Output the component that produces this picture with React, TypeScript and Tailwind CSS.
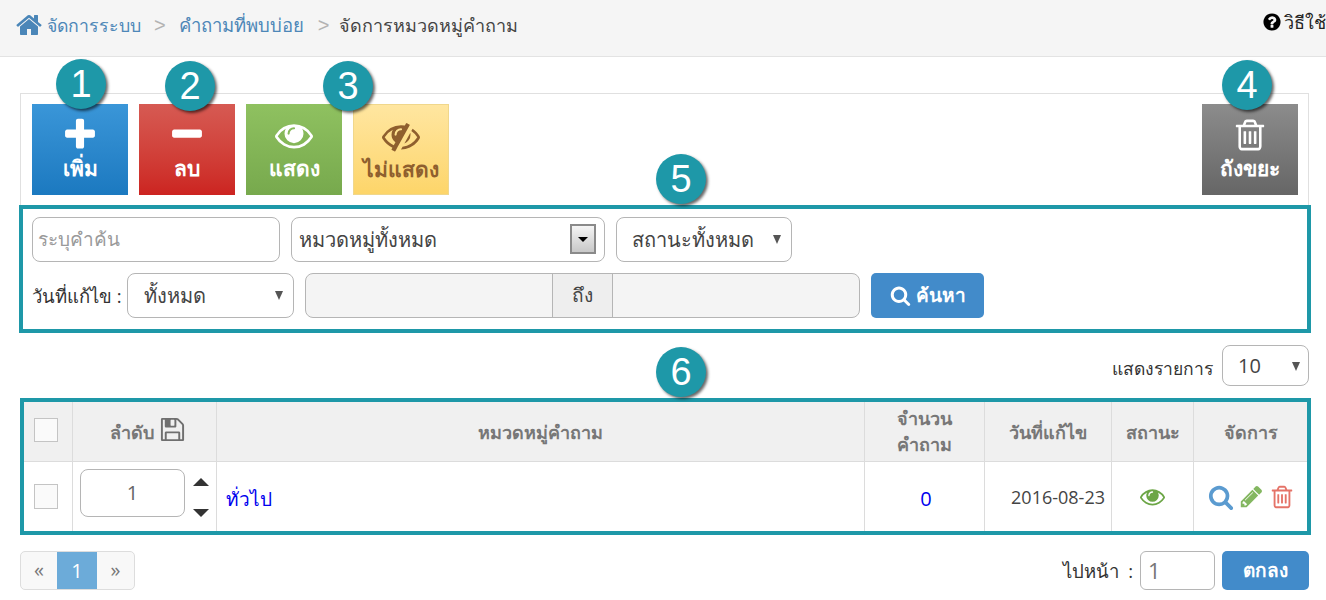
import type { ReactNode } from 'react';

const paths = {
  home: 'M1472 992v480q0 26-19 45t-45 19h-384v-384h-256v384h-384q-26 0-45-19t-19-45v-480q0-1 .5-3t.5-3l575-474 575 474q1 2 1 6zm223-69l-62 74q-8 9-21 11h-3q-13 0-21-7l-692-577-692 577q-12 8-24 7-13-2-21-11l-62-74q-8-10-7-23.500t11-21.500l719-599q32-26 76-26t76 26l244 204v-195q0-14 9-23t23-9h192q14 0 23 9t9 23v408l219 182q10 8 11 21.500t-7 23.500z',
  plus: 'M1600 736v192q0 40-28 68t-68 28h-416v416q0 40-28 68t-68 28h-192q-40 0-68-28t-28-68v-416h-416q-40 0-68-28t-28-68v-192q0-40 28-68t68-28h416v-416q0-40 28-68t68-28h192q40 0 68 28t28 68v416h416q40 0 68 28t28 68z',
  minus: 'M1600 736v192q0 40-28 68t-68 28h-1216q-40 0-68-28t-28-68v-192q0-40 28-68t68-28h1216q40 0 68 28t28 68z',
  eye: 'M1664 960q-152-236-381-353 61 104 61 225 0 185-131.500 316.500t-316.500 131.500-316.500-131.500-131.500-316.500q0-121 61-225-229 117-381 353 133 205 333.500 326.500t434.500 121.500 434.500-121.500 333.500-326.500zm-720-384q0-20-14-34t-34-14q-125 0-214.500 89.500t-89.500 214.500q0 20 14 34t34 14 34-14 14-34q0-86 61-147t147-61q20 0 34-14t14-34zm848 384q0 34-20 69-140 230-376.500 368.500t-499.500 138.500-499.500-139-376.500-368q-20-35-20-69t20-69q140-229 376.500-368t499.500-139 499.500 139 376.500 368q20 35 20 69z',
  eyeSlash: 'M555 1335l78-141q-87-63-136-159t-49-203q0-121 61-225-229 117-381 353 167 258 427 375zm389-759q0-20-14-34t-34-14q-125 0-214.500 89.500t-89.500 214.500q0 20 14 34t34 14 34-14 14-34q0-86 61-147t147-61q20 0 34-14t14-34zm363-191q0 7-1 9-105 188-315 566t-316 567l-49 89q-10 16-28 16-12 0-134-70-16-10-16-28 0-12 44-87-143-65-263.500-173t-208.500-245q-20-31-20-69t20-69q153-235 380-371t496-136q89 0 180 17l54-97q10-16 28-16 5 0 18 6t31 15.500 33 18.500 31.500 18.500 19.500 11.500q16 10 16 27zm37 447q0 139-79 253.500t-209 164.500l280-502q8 45 8 84zm448 128q0 35-20 69-39 64-109 145-150 172-347.500 267t-419.500 95l74-132q212-18 392.500-137t301.500-307q-115-179-282-294l63-112q95 64 182.500 153t144.500 184q20 34 20 69z',
  trash: 'M704 736v576q0 14-9 23t-23 9h-64q-14 0-23-9t-9-23v-576q0-14 9-23t23-9h64q14 0 23 9t9 23zm256 0v576q0 14-9 23t-23 9h-64q-14 0-23-9t-9-23v-576q0-14 9-23t23-9h64q14 0 23 9t9 23zm256 0v576q0 14-9 23t-23 9h-64q-14 0-23-9t-9-23v-576q0-14 9-23t23-9h64q14 0 23 9t9 23zm128 724v-948h-896v948q0 22 7 40.500t14.500 27 10.500 8.500h832q3 0 10.500-8.500t14.500-27 7-40.500zm-672-1076h448l-48-117q-7-9-17-11h-317q-10 2-17 11zm928 32v64q0 14-9 23t-23 9h-96v948q0 83-47 143.500t-113 60.500h-832q-66 0-113-58.500t-47-141.500v-952h-96q-14 0-23-9t-9-23v-64q0-14 9-23t23-9h309l70-167q15-37 54-63t79-26h320q40 0 79 26t54 63l70 167h309q14 0 23 9t9 23z',
  search: 'M1216 832q0-185-131.500-316.500t-316.500-131.500-316.500 131.500-131.500 316.500 131.500 316.500 316.500 131.500 316.500-131.500 131.500-316.500zm512 832q0 52-38 90t-90 38q-54 0-90-38l-343-342q-179 124-399 124-143 0-273.500-55.500t-225-150-150-225-55.500-273.500 55.500-273.500 150-225 225-150 273.500-55.500 273.500 55.500 225 150 150 225 55.500 273.500q0 220-124 399l343 343q37 37 37 90z',
  pencil: 'M491 1536l91-91-235-235-91 91v107h128v128h107zm523-928q0-22-22-22-10 0-17 7l-542 542q-7 7-7 17 0 22 22 22 10 0 17-7l542-542q7-7 7-17zm-54-192l416 416-832 832h-416v-416zm683 96q0 53-37 90l-166 166-416-416 166-165q36-38 90-38 53 0 91 38l235 234q37 39 37 91z',
  save: 'M512 1536h768v-384h-768v384zm896 0h128v-896q0-14-10-38.500t-20-34.500l-281-281q-10-10-34-20t-39-10v416q0 40-28 68t-68 28h-576q-40 0-68-28t-28-68v-416h-128v1280h128v-416q0-40 28-68t68-28h832q40 0 68 28t28 68v416zm-384-928v-320q0-13-9.500-22.500t-22.500-9.500h-192q-13 0-22.500 9.500t-9.500 22.500v320q0 13 9.500 22.500t22.500 9.500h192q13 0 22.500-9.500t9.500-22.500zm640 32v928q0 40-28 68t-68 28h-1344q-40 0-68-28t-28-68v-1344q0-40 28-68t68-28h928q40 0 88 20t76 48l280 280q28 28 48 76t20 88z',
  question: 'M1024 1376v-192q0-14-9-23t-23-9h-192q-14 0-23 9t-9 23v192q0 14 9 23t23 9h192q14 0 23-9t9-23zm256-672q0-88-55.500-163t-138.500-116-170-41q-243 0-371 213-15 24 8 42l132 100q7 6 19 6 16 0 25-12 53-68 86-92 34-24 86-24 48 0 85.500 26t37.500 59q0 38-20 61t-68 45q-63 28-115.500 86.500t-52.500 125.500v36q0 14 9 23t23 9h192q14 0 23-9t9-23q0-19 21.500-49.500t54.500-49.500q32-18 49-28.500t46-35 44.500-48 28-60.500 12.500-81zm384 192q0 209-103 385.500t-279.500 279.500-385.500 103-385.500-103-279.500-279.500-103-385.500 103-385.500 279.500-279.500 385.500-103 385.500 103 279.500 279.500 103 385.500z',
};

function Fa({ name, className }: { name: keyof typeof paths; className: string }) {
  return (
    <svg viewBox="0 0 1792 1792" fill="currentColor" className={className}>
      <path d={paths[name]} />
    </svg>
  );
}

function Badge({ n, className }: { n: number; className: string }) {
  return (
    <div className={`absolute z-10 h-[50px] w-[50px] rounded-full bg-[#1e98a8] shadow-[2px_2px_3px_rgba(0,0,0,0.6)] flex items-center justify-center text-white text-[38px] font-['Liberation_Sans',sans-serif] ${className}`}>
      {n}
    </div>
  );
}

function ToolButton({ icon, label, className }: { icon: ReactNode; label: string; className: string }) {
  return (
    <button className={`w-[96px] h-[91px] flex flex-col items-center pt-[13px] text-[21px] leading-[28px] font-bold ${className}`}>
      <span className="h-[36px] flex items-center">{icon}</span>
      <span className="mt-[1px]">{label}</span>
    </button>
  );
}

function Caret({ className = '' }: { className?: string }) {
  return <span className={`absolute w-0 h-0 border-x-[4.5px] border-x-transparent border-t-[9px] border-t-[#555] ${className}`} />;
}

export default function App() {
  return (
    <div className="relative w-[1326px] h-[600px] overflow-hidden bg-white text-[#444] font-['Open_Sans','Noto_Sans',sans-serif]">
      <Badge n={1} className="left-[56px] top-[59px]" />
      <Badge n={2} className="left-[165px] top-[61px]" />
      <Badge n={3} className="left-[323px] top-[61px]" />
      <Badge n={4} className="left-[1222px] top-[60px]" />
      <Badge n={5} className="left-[656px] top-[154px]" />
      <Badge n={6} className="left-[656px] top-[347px]" />

      <div className="h-[57px] bg-[#f5f5f5] border-b border-[#e3e3e3] flex items-center justify-between pl-[15px] pb-[6px]">
        <div className="flex items-center text-[18px]">
          <Fa name="home" className="w-[28px] h-[28px] text-[#4a86b8] mr-[4px]" />
          <a className="text-[#4d87b8] text-[17.7px]">จัดการระบบ</a>
          <span className="ml-[13px] mr-[13px] text-[#b3b3b3] text-[20px] font-['Liberation_Sans',sans-serif]">&gt;</span>
          <a className="text-[#4d87b8] text-[18.5px]">คำถามที่พบบ่อย</a>
          <span className="ml-[14px] mr-[10px] text-[#b3b3b3] text-[20px] font-['Liberation_Sans',sans-serif]">&gt;</span>
          <span>จัดการหมวดหมู่คำถาม</span>
        </div>
        <div className="flex items-center gap-[2px] text-[18px] font-medium text-[#222] w-[64px] shrink-0 overflow-hidden whitespace-nowrap mb-[6px]">
          <Fa name="question" className="w-[20px] h-[20px] text-black shrink-0" />
          <span>วิธีใช้</span>
        </div>
      </div>

      <div className="ml-5 mr-[17px] mt-9 h-[112px] border border-b-0 border-[#e0e0e0] flex justify-between pt-[10px] pl-[11px] pr-[10px]">
        <div className="flex gap-[11px]">
          <ToolButton className="text-white bg-gradient-to-b from-[#3a96d8] to-[#1b79c0]" label="เพิ่ม" icon={<Fa name="plus" className="w-[38px] h-[38px]" />} />
          <ToolButton className="text-white bg-gradient-to-b from-[#d65a53] to-[#cc2320]" label="ลบ" icon={<Fa name="minus" className="w-[38px] h-[38px]" />} />
          <ToolButton className="text-white bg-gradient-to-b from-[#8fc160] to-[#77a94d]" label="แสดง" icon={<Fa name="eye" className="w-[38px] h-[38px]" />} />
          <ToolButton className="text-[#8f5f2e] bg-gradient-to-b from-[#ffe6a0] to-[#fdd569] border border-[#f0d78c]" label="ไม่แสดง" icon={<Fa name="eyeSlash" className="w-[38px] h-[38px]" />} />
        </div>
        <ToolButton className="text-white bg-gradient-to-b from-[#8c8c8c] to-[#666666]" label="ถังขยะ" icon={<Fa name="trash" className="w-[36px] h-[36px]" />} />
      </div>

      <div className="ml-[19px] mr-[15px] h-[128px] border-4 border-[#1e98a8] px-[9px] pt-[8px] text-[20px]">
        <div className="flex gap-[11px] h-[45px]">
          <div className="w-[248px] border border-[#b5b5b5] rounded-[8px] flex items-center px-[5px] text-[#9a9a9a] text-[19px]">ระบุคำค้น</div>
          <div className="relative w-[314px] border border-[#b5b5b5] rounded-[8px] flex items-center pl-[7px]">
            หมวดหมู่ทั้งหมด
            <span className="absolute left-[278px] top-[6px] w-[26px] h-[30px] border-2 border-[#8a8a8a] bg-gradient-to-b from-[#f5f5f5] to-[#c8c8c8] flex items-center justify-center">
              <span className="w-0 h-0 border-x-[5px] border-x-transparent border-t-[5px] border-t-black" />
            </span>
          </div>
          <div className="relative w-[176px] border border-[#b5b5b5] rounded-[8px] flex items-center pl-[15px]">
            สถานะทั้งหมด
            <Caret className="left-[156px] top-[17px]" />
          </div>
        </div>
        <div className="flex items-center h-[45px] mt-[11px]">
          <span className="text-[18.5px] text-[#333] whitespace-nowrap w-[95px]">วันที่แก้ไข :</span>
          <div className="relative w-[167px] h-full border border-[#b5b5b5] rounded-[8px] flex items-center pl-[16px]">
            ทั้งหมด
            <Caret className="left-[147px] top-[17px]" />
          </div>
          <div className="ml-[11px] w-[555px] h-full border border-[#b5b5b5] rounded-[8px] bg-[#f4f4f4] flex overflow-hidden">
            <div className="w-[246px]" />
            <div className="w-[61px] border-x border-[#b5b5b5] bg-[#eeeeee] flex items-center justify-center text-[19px]">ถึง</div>
          </div>
          <button className="ml-[11px] w-[113px] h-full rounded-[5px] bg-[#428bca] text-white flex items-center justify-center gap-[5px] font-bold text-[19px]">
            <Fa name="search" className="w-[21px] h-[21px]" />
            ค้นหา
          </button>
        </div>
      </div>

      <div className="mt-3 mr-[17px] h-[41px] flex justify-end items-center gap-[9px] text-[17.5px]">
        <span className="text-[#333] mt-[6px]">แสดงรายการ</span>
        <div className="relative w-[87px] h-full border border-[#b5b5b5] rounded-[8px] flex items-center pl-[15px] text-[20px]">
          10
          <Caret className="left-[69px] top-[16px]" />
        </div>
      </div>

      <div className="mt-3 ml-5 mr-[15px] h-[137px] border-4 border-[#1e98a8]">
        <div className="flex h-[60px] bg-[#f0f0f0] border-b border-[#dcdcdc] text-[#777] font-bold text-[18px] text-center leading-[26px]">
          <div className="w-[49px] flex items-center justify-center border-r border-[#dcdcdc] pr-[4px]">
            <span className="w-[24px] h-[24px] border border-[#c4c4c4] bg-[#fafafa] mb-[4px]" />
          </div>
          <div className="w-[144px] flex items-center justify-center gap-[5px] border-r border-[#dcdcdc] pt-[1px] pl-[7px]">
            ลำดับ
            <Fa name="save" className="w-[27px] h-[27px] text-[#6f6f6f] mb-[6px]" />
          </div>
          <div className="w-[648px] flex items-center justify-center border-r border-[#dcdcdc]">หมวดหมู่คำถาม</div>
          <div className="w-[120px] flex items-center justify-center border-r border-[#dcdcdc] pb-[1px]">จำนวน<br />คำถาม</div>
          <div className="w-[127px] flex items-center justify-center border-r border-[#dcdcdc]">วันที่แก้ไข</div>
          <div className="w-[82px] flex items-center justify-center border-r border-[#dcdcdc]">สถานะ</div>
          <div className="flex-1 flex items-center justify-center">จัดการ</div>
        </div>
        <div className="flex h-[69px] bg-white">
          <div className="w-[49px] flex items-center justify-center border-r border-[#dcdcdc] pr-[4px]">
            <span className="w-[24px] h-[25px] border border-[#c4c4c4] bg-[#fafafa] mb-[1px]" />
          </div>
          <div className="w-[144px] flex items-center border-r border-[#dcdcdc] pl-[7px] gap-[8px]">
            <div className="w-[105px] h-[48px] border border-[#b5b5b5] rounded-[8px] flex items-center justify-center text-[20px] text-[#666] mb-[7px]">1</div>
            <div className="flex flex-col gap-[23px] mb-[-1px]">
              <span className="w-0 h-0 border-x-[8px] border-x-transparent border-b-[8px] border-b-[#333]" />
              <span className="w-0 h-0 border-x-[8px] border-x-transparent border-t-[8px] border-t-[#333]" />
            </div>
          </div>
          <div className="w-[648px] flex items-center border-r border-[#dcdcdc] pl-[9px] text-[19px] text-[#0000ee] pt-[6px]">ทั่วไป</div>
          <div className="w-[120px] flex items-center justify-center border-r border-[#dcdcdc] text-[20px] text-[#0000ee] pt-[5px] pl-[3px]">0</div>
          <div className="w-[127px] flex items-center justify-end border-r border-[#dcdcdc] pr-[6px] text-[18px] pt-[2px]">2016-08-23</div>
          <div className="w-[82px] flex items-center justify-center border-r border-[#dcdcdc]">
            <Fa name="eye" className="w-[25px] h-[25px] text-[#6ca646]" />
          </div>
          <div className="flex-1 flex items-center justify-center gap-[5px] pl-[2px]">
            <Fa name="search" className="w-[26px] h-[26px] text-[#5b9bd0]" />
            <Fa name="pencil" className="w-[25px] h-[25px] text-[#84b761]" />
            <Fa name="trash" className="w-[26px] h-[26px] text-[#e57368]" />
          </div>
        </div>
      </div>

      <div className="mt-4 ml-5 mr-[17px] flex justify-between">
        <div className="flex h-[39px] mt-0 border border-[#dddddd] rounded-[5px] overflow-hidden bg-[#f8f8f8] text-[#777] text-[20px]">
          <span className="w-[36px] flex items-center justify-center pb-[2px]">«</span>
          <span className="w-[40px] bg-[#6cabd9] text-white flex items-center justify-center">1</span>
          <span className="w-[37px] flex items-center justify-center pb-[2px]">»</span>
        </div>
        <div className="flex items-center h-[39px] text-[18.5px]">
          <span className="text-[#333] mr-[7px]">ไปหน้า&nbsp;&nbsp;:</span>
          <div className="w-[75px] h-full border border-[#b5b5b5] rounded-[6px] flex items-center pl-[7px] text-[#777] text-[22px]">1</div>
          <button className="ml-[7px] w-[87px] h-full rounded-[5px] bg-[#428bca] text-white font-bold text-[19px]">ตกลง</button>
        </div>
      </div>
    </div>
  );
}
